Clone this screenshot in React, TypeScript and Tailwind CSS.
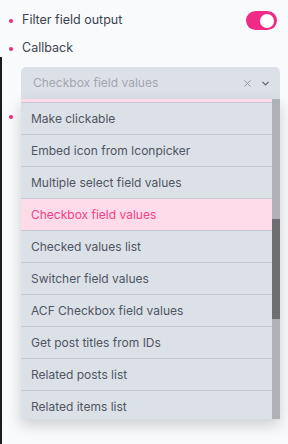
import { X, ChevronDown } from "lucide-react";

const options = [
  { label: "Make clickable" },
  { label: "Embed icon from Iconpicker" },
  { label: "Multiple select field values" },
  { label: "Checkbox field values", active: true },
  { label: "Checked values list" },
  { label: "Switcher field values" },
  { label: "ACF Checkbox field values" },
  { label: "Get post titles from IDs" },
  { label: "Related posts list" },
  { label: "Related items list" },
];

function Bullet() {
  return <span className="block w-[4px] h-[4px] rounded-full bg-[#f0287f] shrink-0" />;
}

export default function App() {
  return (
    <div
      className="relative min-h-screen bg-[#f9fafc] text-[12px] text-[#3c4350] overflow-hidden"
      style={{ fontFamily: "Inter, 'Noto Sans', sans-serif" }}
    >
      {/* dark edge on the left */}
      <div className="absolute left-0 top-[57px] bottom-0 w-[2px] bg-[#1c1c1e]" />

      {/* Filter field output */}
      <div className="flex items-center justify-between pt-[11px] pl-[9px] pr-[11px] h-[30px]">
        <div className="flex items-center gap-[9px]">
          <Bullet />
          <span className="text-[12.5px]">Filter field output</span>
        </div>
        <div className="w-[31px] h-[19px] rounded-full bg-[#f02b85] flex items-center justify-end pr-[3px]">
          <span className="block w-[14px] h-[14px] rounded-full bg-white" />
        </div>
      </div>

      {/* Callback */}
      <div className="flex items-center gap-[9px] pl-[9px] mt-[9px] h-[19px]">
        <Bullet />
        <span className="text-[12.5px]">Callback</span>
      </div>

      <div className="relative ml-[21px] mr-[8px] mt-[9px]">
        <div className="h-[32px] rounded-t-[5px] bg-[#dce1e8] flex items-center pl-[12px] pr-[9px]">
          <span className="flex-1 text-[#a1a6ae]">Checkbox field values</span>
          <X size={11} strokeWidth={2} className="text-[#8d939b] mr-[7px]" />
          <ChevronDown size={11} strokeWidth={2.6} className="text-[#5b616b]" />
        </div>

        {/* dropdown */}
        <div className="absolute top-full left-0 right-0 z-10 h-[320px] flex bg-[#dce1e8] shadow-[0_6px_14px_rgba(0,0,0,0.18)]">
          <div className="flex-1 overflow-hidden">
            <div className="h-[3px] bg-[#fddbe8]" />
            {options.map((o) => (
              <div
                key={o.label}
                className={
                  "h-[32px] border-t border-[#c4c9d2] flex items-center pl-[10px] " +
                  (o.active ? "bg-[#fddbe8] text-[#ef4287]" : "text-[#4f5561]")
                }
              >
                {o.label}
              </div>
            ))}
          </div>
          <div className="w-[8px] bg-[#aeb2b6] flex flex-col">
            <div className="h-[120px]" />
            <div className="h-[100px] bg-[#6d6f72]" />
          </div>
        </div>
      </div>

      {/* third field, covered by the dropdown */}
      <div className="flex items-center gap-[9px] pl-[9px] mt-[16px] h-[4px]">
        <Bullet />
      </div>
    </div>
  );
}
